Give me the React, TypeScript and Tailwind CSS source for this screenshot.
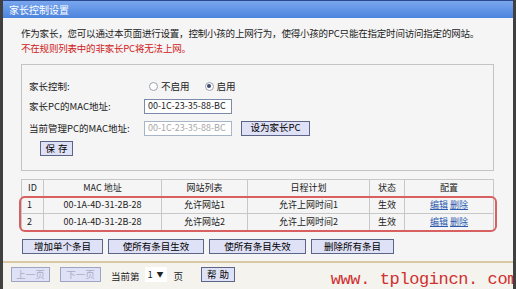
const font = "font-['SimSun','Noto_Sans_CJK_SC',sans-serif]";

function Btn({ children, className = "", disabled = false }: { children: React.ReactNode; className?: string; disabled?: boolean }) {
  return (
    <div
      className={`flex items-center justify-center h-[15px] border bg-[#dfe1f6] text-[9.5px] leading-none ${
        disabled ? "text-[#a8acc8] border-[#a0a4c0]" : "text-black border-[#5c6488]"
      } ${className}`}
    >
      {children}
    </div>
  );
}

function Radio({ checked, label }: { checked: boolean; label: string }) {
  return (
    <div className="flex items-center gap-[3px]">
      <span className="w-[9px] h-[9px] rounded-full border border-[#9aa0b0] bg-white flex items-center justify-center">
        {checked && <span className="w-[4px] h-[4px] rounded-full bg-[#3a4a70]" />}
      </span>
      <span>{label}</span>
    </div>
  );
}

const rows = [
  { id: "1", mac: "00-1A-4D-31-2B-28", site: "允许网站1", sched: "允许上网时间1" },
  { id: "2", mac: "00-1A-4D-31-2B-28", site: "允许网站2", sched: "允许上网时间2" },
];

export default function App() {
  return (
    <div className={`w-[516px] h-[289px] bg-[#f5f5f5] border-l-[3px] border-r-[3px] border-[#404040] relative overflow-hidden text-[9.5px] text-[#222] ${font}`}>
      <div className="h-[18px] bg-gradient-to-b from-[#79a6ee] to-[#4d84de] border-t border-[#2a4a90] flex items-center pl-[6px] text-white text-[10px]">
        家长控制设置
      </div>
      <div className="pl-[18px] pt-[8px] leading-[15px] tracking-[-0.2px]">
        <div>作为家长，您可以通过本页面进行设置，控制小孩的上网行为，使得小孩的PC只能在指定时间访问指定的网站。</div>
        <div className="text-[#d02020]">不在规则列表中的非家长PC将无法上网。</div>
      </div>
      <div className="ml-[18px] mt-[8px] w-[473px] h-[107px] border border-[#c4c4c4] pl-[7px] pt-[13px]">
        <div className="flex items-center h-[16px]">
          <span className="w-[120px]">家长控制:</span>
          <div className="flex items-center gap-[15px]">
            <Radio checked={false} label="不启用" />
            <Radio checked label="启用" />
          </div>
        </div>
        <div className="flex items-center h-[22px] mt-[1px]">
          <span className="w-[115px]">家长PC的MAC地址:</span>
          <div className="w-[88px] h-[15px] border border-[#7a8aa8] bg-white flex items-center pl-[3px] text-[9px]">00-1C-23-35-88-BC</div>
        </div>
        <div className="flex items-center h-[22px]">
          <span className="w-[115px]">当前管理PC的MAC地址:</span>
          <div className="w-[88px] h-[15px] border border-[#a8b4c8] bg-white flex items-center pl-[3px] text-[9px] text-[#a8a8a8]">00-1C-23-35-88-BC</div>
          <Btn className="ml-[9px] w-[69px]">设为家长PC</Btn>
        </div>
        <div className="mt-[2px] ml-[11px]">
          <Btn className="w-[33px] tracking-[3px] pl-[3px]">保存</Btn>
        </div>
      </div>
      <div className="ml-[18px] mt-[8px] w-[473px] relative">
        <table className="w-full border-collapse text-center text-[9px]">
          <thead>
            <tr className="h-[17px]">
              <th className="w-[22px] border border-[#c8c8c8] font-normal">ID</th>
              <th className="w-[118px] border border-[#c8c8c8] font-normal">MAC 地址</th>
              <th className="w-[86px] border border-[#c8c8c8] font-normal">网站列表</th>
              <th className="w-[122px] border border-[#c8c8c8] font-normal">日程计划</th>
              <th className="w-[35px] border border-[#c8c8c8] font-normal">状态</th>
              <th className="border border-[#c8c8c8] font-normal">配置</th>
            </tr>
          </thead>
          <tbody>
            {rows.map((r) => (
              <tr key={r.id} className="h-[17px]">
                <td className="border border-[#c8c8c8] text-left pl-[5px]">{r.id}</td>
                <td className="border border-[#c8c8c8]">{r.mac}</td>
                <td className="border border-[#c8c8c8]">{r.site}</td>
                <td className="border border-[#c8c8c8]">{r.sched}</td>
                <td className="border border-[#c8c8c8]">生效</td>
                <td className="border border-[#c8c8c8]">
                  <span className="text-[#2c5cb0] underline">编辑</span>{" "}
                  <span className="text-[#2c5cb0] underline">删除</span>
                </td>
              </tr>
            ))}
          </tbody>
        </table>
        <div className="absolute left-[-2px] right-[-3px] top-[17px] h-[36px] border-2 border-[#d86060] rounded-[6px] pointer-events-none" />
      </div>
      <div className="ml-[19px] mt-[8px] flex gap-[5px]">
        <Btn className="w-[81px]">增加单个条目</Btn>
        <Btn className="w-[96px]">使所有条目生效</Btn>
        <Btn className="w-[97px]">使所有条目失效</Btn>
        <Btn className="w-[83px]">删除所有条目</Btn>
      </div>
      <div className="mt-[7px] border-t-2 border-[#d8c9a4] bg-[#f4f3ee] h-[30px] flex items-start pt-[4px] pl-[8px]">
        <Btn disabled className="w-[39px]">上一页</Btn>
        <Btn disabled className="w-[41px] ml-[10px]">下一页</Btn>
        <span className="ml-[10px] mt-[2px]">当前第</span>
        <div className="ml-[5px] w-[22px] h-[15px] bg-white flex items-center justify-between px-[3px]">
          <span>1</span>
          <span className="text-[7px]">▼</span>
        </div>
        <span className="ml-[7px] mt-[2px]">页</span>
        <Btn className="ml-[18px] w-[34px] tracking-[3px] pl-[3px]">帮助</Btn>
      </div>
      <div className="absolute right-[-4px] bottom-[1px] text-[17px] leading-[17px] tracking-[-0.4px] whitespace-pre text-[#d03030] font-['Liberation_Mono',monospace]">
        www. tplogincn. com
      </div>
    </div>
  );
}
